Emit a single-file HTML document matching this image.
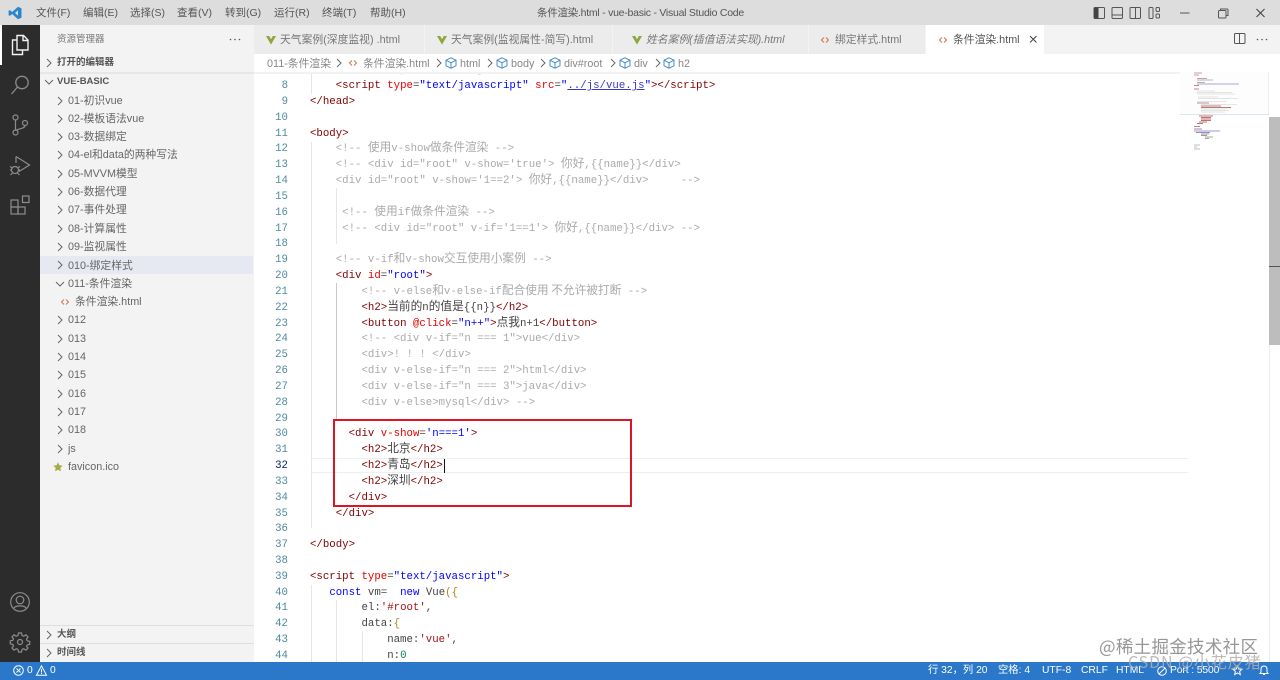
<!DOCTYPE html>
<html lang="zh"><head><meta charset="utf-8"><title>条件渲染.html - vue-basic - Visual Studio Code</title>
<style>
html,body{margin:0;padding:0;width:1280px;height:680px;overflow:hidden;background:#fff}
body{position:relative;font-family:"Liberation Sans","Noto Sans CJK SC",sans-serif;font-size:11px;color:#616161;filter:blur(.3px)}
.a{position:absolute;white-space:nowrap}
svg{position:absolute;overflow:visible}
#title{left:0;top:0;width:1280px;height:25px;background:#dddddd}
.mn{top:5px;line-height:16px;color:#555;font-size:10.5px}
#act{left:0;top:25px;width:40px;height:637px;background:#2c2c2c}
#side{left:40px;top:25px;width:214px;height:637px;background:#f3f3f3}
.r{left:68px;height:18px;line-height:18px;color:#666;font-size:10.8px}
.h{left:57px;font-weight:bold;font-size:9.5px;color:#555;line-height:14px}
#tabs{left:254px;top:25px;width:1026px;height:29px;background:#f3f3f3}
.tab{top:25px;height:29px;background:#ececec;border-right:1px solid #f3f3f3}
.tt{top:32px;line-height:16px;color:#777;font-size:10.8px}
.b{top:56px;line-height:16px;color:#888;font-size:10.8px}
#code{left:254px;top:72px;width:1015px;height:590px;overflow:hidden;background:#fff}
#nums{position:absolute;left:0;top:-8.7px;width:34px;text-align:right;font:10.72px/15.83px "Liberation Mono",monospace;color:#4f8ba0}
#nums div{height:15.83px}
#src{position:absolute;left:56px;top:-8.7px;font:10.72px/15.83px "Liberation Mono","Noto Sans CJK SC",monospace;color:#444}
#src div{height:15.83px;white-space:pre}
i{font-style:normal;font-size:11.7px;font-family:"Noto Sans CJK SC",sans-serif;line-height:10px}
.t{color:#800000}.n{color:#e50000}.s{color:#0000ff}.c{color:#aaa}.k{color:#0000ff}.q{color:#a31515}.g{color:#098658}.y{color:#b5851a}
.gd{position:absolute;width:1px;background:#e6e6e6}
#st{left:0;top:662px;width:1280px;height:18px;background:#2b78cb}
.w{top:663px;line-height:16px;color:#fff;font-size:10.3px}
.wm{color:rgba(110,110,110,.72);font-family:"Noto Sans CJK SC","Liberation Sans",sans-serif}
</style></head><body>

<svg width="0" height="0" style="position:absolute">
<defs>
<symbol id="cr" viewBox="0 0 8 10"><path d="M2 1l4 4-4 4" fill="none" stroke="#666" stroke-width="1"/></symbol>
<symbol id="cd" viewBox="0 0 10 8"><path d="M1 2l4 4 4-4" fill="none" stroke="#666" stroke-width="1"/></symbol>
<symbol id="vue" viewBox="0 0 10 10"><path d="M0 1h3.2L5 4.2 6.8 1H10L5 9.6z" fill="#8ea63c"/></symbol>
<symbol id="ht" viewBox="0 0 10 8"><path d="M4 1.500L1.500 4 4 6.500M6 1.500L8.500 4 6 6.500" fill="none" stroke="#d0744f" stroke-width="1"/></symbol>
<symbol id="cube" viewBox="0 0 12 12"><path d="M6 .8l5 2.400v5.600l-5 2.400-5-2.400V3.200zM1 3.200l5 2.600 5-2.600M6 5.800v5.400" fill="none" stroke="#4a8cc4" stroke-width="1"/></symbol>
</defs>
</svg>

<!-- Title bar -->
<div class="a" id="title"></div>
<svg style="left:8px;top:6px" width="14" height="14" viewBox="0 0 14 14"><path d="M10 .8L13.500 2.400v9.200L10 13.200 4.200 8 1.800 9.900.6 9.200V4.800l1.200-.7L4.200 6zM10 4.200L7 7l3 2.800z" fill="#2a85cf"/></svg>
<div class="a mn" style="left:36px">文件(F)</div>
<div class="a mn" style="left:83px">编辑(E)</div>
<div class="a mn" style="left:130px">选择(S)</div>
<div class="a mn" style="left:177px">查看(V)</div>
<div class="a mn" style="left:225px">转到(G)</div>
<div class="a mn" style="left:274px">运行(R)</div>
<div class="a mn" style="left:322px">终端(T)</div>
<div class="a mn" style="left:370px">帮助(H)</div>
<div class="a mn" style="left:537px;letter-spacing:-.25px">条件渲染.html - vue-basic - Visual Studio Code</div>
<svg style="left:1093px;top:7px" width="70" height="12" viewBox="0 0 70 12">
<rect x="1" y=".5" width="10.500" height="11" rx="1" fill="none" stroke="#555"/><rect x="1" y=".5" width="4.500" height="11" fill="#444"/>
<rect x="19" y=".5" width="10.500" height="11" rx="1" fill="none" stroke="#555"/><path d="M19 8h10.500" stroke="#555"/>
<rect x="37" y=".5" width="10.500" height="11" rx="1" fill="none" stroke="#555"/><path d="M42.500 .5v11" stroke="#555"/>
<rect x="56" y=".5" width="4" height="11" rx="1" fill="none" stroke="#555"/><rect x="63" y=".5" width="3.500" height="4" rx="1" fill="none" stroke="#555"/><rect x="63" y="7" width="3.500" height="4" rx="1" fill="none" stroke="#555"/>
</svg>
<svg style="left:1180px;top:8px" width="90" height="12" viewBox="0 0 90 12">
<path d="M0 5h9.500" stroke="#555"/>
<rect x="38.500" y="2.500" width="7.500" height="7.500" rx="1" fill="none" stroke="#555"/><path d="M40.500 2.500V1h6.500q1 0 1 1v5.500h-2" fill="none" stroke="#555"/>
<path d="M76.500 1l8 8M84.500 1l-8 8" stroke="#444" stroke-width="1.100"/>
</svg>

<!-- Activity bar -->
<div class="a" id="act"></div>
<div class="a" style="left:0;top:25px;width:1.500px;height:40px;background:#fff"></div>
<svg style="left:10px;top:34px" width="20" height="22" viewBox="0 0 20 22"><path d="M7 1.500h6.500l4.500 4.500v10H7zM13 1.500V6.500h5M7 6H2.500V20.500H12.500V16" fill="none" stroke="#f2f2f2" stroke-width="1.400"/></svg>
<svg style="left:10px;top:75px" width="20" height="20" viewBox="0 0 20 20"><circle cx="12" cy="7.500" r="6.200" fill="none" stroke="#8c8c8c" stroke-width="1.300"/><path d="M7.500 12L1.500 19" stroke="#8c8c8c" stroke-width="1.300"/></svg>
<svg style="left:11px;top:114px" width="18" height="22" viewBox="0 0 18 22"><g fill="none" stroke="#8c8c8c" stroke-width="1.200"><circle cx="4.500" cy="3.500" r="2.500"/><circle cx="4.500" cy="18.500" r="2.500"/><circle cx="14" cy="9" r="2.500"/><path d="M4.500 6v10M14 11.500c0 3.500-7 3-9.500 5"/></g></svg>
<svg style="left:9px;top:155px" width="22" height="22" viewBox="0 0 22 22"><g fill="none" stroke="#8c8c8c" stroke-width="1.200"><path d="M7 1.500L20.500 10 10 16.500M7 1.500V8"/><circle cx="6" cy="15" r="3.500"/><path d="M1 11.500l2.500 1.500M11 11.500L8.500 13M1 15h1.500M9.500 15H11M1.500 20l2-2M10.500 20l-2-2"/></g></svg>
<svg style="left:10px;top:195px" width="20" height="20" viewBox="0 0 20 20"><g fill="none" stroke="#8c8c8c" stroke-width="1.200"><rect x="1" y="5" width="7" height="7"/><rect x="1" y="12" width="7" height="7"/><rect x="8" y="12" width="7" height="7"/><rect x="12.500" y="1" width="6.500" height="6.500"/></g></svg>
<svg style="left:10px;top:592px" width="20" height="20" viewBox="0 0 20 20"><g fill="none" stroke="#8c8c8c" stroke-width="1.200"><circle cx="10" cy="10" r="9.300"/><circle cx="10" cy="8" r="3.800"/><path d="M3.500 16.500c2-3.500 11-3.500 13 0"/></g></svg>
<svg style="left:10px;top:632px" width="20" height="20" viewBox="0 0 20 20"><g fill="none" stroke="#8c8c8c" stroke-width="1.200"><circle cx="10" cy="10" r="2.500"/><path d="M8.500 1h3l.5 2.500 1.700.7L16 2.800 18 5l-1.500 2.200.7 1.700 2.500.5v3l-2.500.5-.7 1.500L18 16l-2 2.200-2.300-1.500-1.700.8-.5 2.500h-3l-.5-2.500-1.700-.8L4 18.200 2 16l1.500-2.100-.7-1.500-2.500-.5v-3l2.500-.5.700-1.700L2 5l2-2.200 2.300 1.400 1.700-.7z"/></g></svg>

<!-- Sidebar -->
<div class="a" id="side"></div>
<div class="a" style="left:57px;top:33px;font-size:9.500px;line-height:14px;color:#777">资源管理器</div>
<svg style="left:229px;top:38px" width="12" height="3"><circle cx="1.500" cy="1.500" r=".8" fill="#555"/><circle cx="6" cy="1.500" r=".8" fill="#555"/><circle cx="10.500" cy="1.500" r=".8" fill="#555"/></svg>
<svg style="left:45px;top:58px" width="8" height="10"><use href="#cr"/></svg>
<div class="a h" style="top:56px">打开的编辑器</div>
<div class="a" style="left:40px;top:72px;width:214px;height:2px;background:#e7e7e7"></div>
<svg style="left:44px;top:78px" width="10" height="8"><use href="#cd"/></svg>
<div class="a h" style="top:75px">VUE-BASIC</div>

<div class="a" style="left:40px;top:256px;width:213px;height:18px;background:#e6e8f2"></div>

<div class="a r" style="top:91.500px">01-初识vue</div>
<div class="a r" style="top:109.500px">02-模板语法vue</div>
<div class="a r" style="top:128px">03-数据绑定</div>
<div class="a r" style="top:146px">04-el和data的两种写法</div>
<div class="a r" style="top:164.500px">05-MVVM模型</div>
<div class="a r" style="top:183px">06-数据代理</div>
<div class="a r" style="top:201px">07-事件处理</div>
<div class="a r" style="top:219.500px">08-计算属性</div>
<div class="a r" style="top:238px">09-监视属性</div>
<div class="a r" style="top:256.500px">010-绑定样式</div>
<div class="a r" style="top:274.500px">011-条件渲染</div>
<div class="a r" style="top:293px;left:75px">条件渲染.html</div>
<div class="a r" style="top:311px">012</div>
<div class="a r" style="top:329.500px">013</div>
<div class="a r" style="top:348px">014</div>
<div class="a r" style="top:366px">015</div>
<div class="a r" style="top:384.500px">016</div>
<div class="a r" style="top:403px">017</div>
<div class="a r" style="top:421px">018</div>
<div class="a r" style="top:440px">js</div>
<div class="a r" style="top:458px">favicon.ico</div>

<svg style="left:56px;top:96px" width="8" height="10"><use href="#cr"/></svg>
<svg style="left:56px;top:114px" width="8" height="10"><use href="#cr"/></svg>
<svg style="left:56px;top:132px" width="8" height="10"><use href="#cr"/></svg>
<svg style="left:56px;top:150px" width="8" height="10"><use href="#cr"/></svg>
<svg style="left:56px;top:169px" width="8" height="10"><use href="#cr"/></svg>
<svg style="left:56px;top:187px" width="8" height="10"><use href="#cr"/></svg>
<svg style="left:56px;top:205px" width="8" height="10"><use href="#cr"/></svg>
<svg style="left:56px;top:224px" width="8" height="10"><use href="#cr"/></svg>
<svg style="left:56px;top:242px" width="8" height="10"><use href="#cr"/></svg>
<svg style="left:56px;top:260px" width="8" height="10"><use href="#cr"/></svg>
<svg style="left:55px;top:280px" width="10" height="8"><use href="#cd"/></svg>
<svg style="left:60px;top:298px" width="10" height="8"><use href="#ht"/></svg>
<svg style="left:56px;top:315px" width="8" height="10"><use href="#cr"/></svg>
<svg style="left:56px;top:334px" width="8" height="10"><use href="#cr"/></svg>
<svg style="left:56px;top:352px" width="8" height="10"><use href="#cr"/></svg>
<svg style="left:56px;top:370px" width="8" height="10"><use href="#cr"/></svg>
<svg style="left:56px;top:389px" width="8" height="10"><use href="#cr"/></svg>
<svg style="left:56px;top:407px" width="8" height="10"><use href="#cr"/></svg>
<svg style="left:56px;top:425px" width="8" height="10"><use href="#cr"/></svg>
<svg style="left:56px;top:444px" width="8" height="10"><use href="#cr"/></svg>
<svg style="left:53px;top:462px" width="10" height="10" viewBox="0 0 10 10"><path d="M5 .3l1.400 3 3.300.4-2.400 2.300.6 3.300L5 7.700 2.100 9.300l.6-3.300L.3 3.700l3.300-.4z" fill="#a3ad3f"/></svg>

<div class="a" style="left:40px;top:625px;width:214px;height:1px;background:#dedede"></div>
<svg style="left:45px;top:630px" width="8" height="10"><use href="#cr"/></svg>
<div class="a h" style="top:628px">大纲</div>
<div class="a" style="left:40px;top:643px;width:214px;height:1px;background:#dedede"></div>
<svg style="left:45px;top:648px" width="8" height="10"><use href="#cr"/></svg>
<div class="a h" style="top:646px">时间线</div>

<!-- Tabs -->
<div class="a" id="tabs"></div>
<div class="a tab" style="left:254px;width:170px"></div>
<div class="a tab" style="left:425px;width:187px"></div>
<div class="a tab" style="left:613px;width:195px"></div>
<div class="a tab" style="left:809px;width:116px"></div>
<div class="a" style="left:926px;top:25px;width:118px;height:29px;background:#fff"></div>
<svg style="left:266px;top:35px" width="10" height="10"><use href="#vue"/></svg>
<div class="a tt" style="left:280px">天气案例(深度监视) .html</div>
<svg style="left:437px;top:35px" width="10" height="10"><use href="#vue"/></svg>
<div class="a tt" style="left:451px">天气案例(监视属性-简写).html</div>
<svg style="left:632px;top:35px" width="10" height="10"><use href="#vue"/></svg>
<div class="a tt" style="left:646px;font-style:italic">姓名案例(插值语法实现).html</div>
<svg style="left:820px;top:36px" width="10" height="8"><use href="#ht"/></svg>
<div class="a tt" style="left:835px">绑定样式.html</div>
<svg style="left:938px;top:36px" width="10" height="8"><use href="#ht"/></svg>
<div class="a tt" style="left:953px;color:#555">条件渲染.html</div>
<svg style="left:1029px;top:35px" width="9" height="9"><path d="M1 1l6.500 6.500M7.500 1L1 7.500" stroke="#444" stroke-width="1"/></svg>
<svg style="left:1234px;top:33px" width="12" height="12"><rect x=".5" y=".5" width="10.500" height="10" rx="1" fill="none" stroke="#555"/><path d="M5.500 .5v10" stroke="#555"/></svg>
<svg style="left:1256px;top:38px" width="12" height="3"><circle cx="1.500" cy="1.500" r=".8" fill="#555"/><circle cx="6" cy="1.500" r=".8" fill="#555"/><circle cx="10.500" cy="1.500" r=".8" fill="#555"/></svg>

<!-- Breadcrumbs -->
<div class="a" style="left:254px;top:54px;width:1026px;height:18px;background:#fff"></div>
<div class="a b" style="left:267px">011-条件渲染</div>
<svg style="left:335px;top:58px" width="8" height="10"><use href="#cr"/></svg>
<svg style="left:348px;top:59px" width="10" height="8"><use href="#ht"/></svg>
<div class="a b" style="left:363px">条件渲染.html</div>
<svg style="left:435px;top:58px" width="8" height="10"><use href="#cr"/></svg>
<svg style="left:445px;top:57px" width="12" height="12"><use href="#cube"/></svg>
<div class="a b" style="left:460px">html</div>
<svg style="left:486px;top:58px" width="8" height="10"><use href="#cr"/></svg>
<svg style="left:496px;top:57px" width="12" height="12"><use href="#cube"/></svg>
<div class="a b" style="left:511px">body</div>
<svg style="left:539px;top:58px" width="8" height="10"><use href="#cr"/></svg>
<svg style="left:549px;top:57px" width="12" height="12"><use href="#cube"/></svg>
<div class="a b" style="left:564px">div#root</div>
<svg style="left:609px;top:58px" width="8" height="10"><use href="#cr"/></svg>
<svg style="left:619px;top:57px" width="12" height="12"><use href="#cube"/></svg>
<div class="a b" style="left:634px">div</div>
<svg style="left:654px;top:58px" width="8" height="10"><use href="#cr"/></svg>
<svg style="left:663px;top:57px" width="12" height="12"><use href="#cube"/></svg>
<div class="a b" style="left:678px">h2</div>

<!-- Editor -->
<div class="a" id="code">
<div class="gd" style="left:56.500px;top:0;height:22px"></div>
<div class="gd" style="left:56.500px;top:70px;height:386px"></div>
<div class="gd" style="left:81.500px;top:116px;height:56px"></div>
<div class="gd" style="left:81.500px;top:211px;height:136px;background:#c9c9c9"></div>
<div class="gd" style="left:56.500px;top:513px;height:80px"></div>
<div class="gd" style="left:81.500px;top:528px;height:70px"></div>
<div class="gd" style="left:107.500px;top:559px;height:40px"></div>
<div class="a" style="left:57px;top:386px;width:877px;height:15px;border-top:1px solid #eee;border-bottom:1px solid #eee;box-sizing:border-box"></div>
<div id="nums"><div>7</div><div>8</div><div>9</div><div>10</div><div>11</div><div>12</div><div>13</div><div>14</div><div>15</div><div>16</div><div>17</div><div>18</div><div>19</div><div>20</div><div>21</div><div>22</div><div>23</div><div>24</div><div>25</div><div>26</div><div>27</div><div>28</div><div>29</div><div>30</div><div>31</div><div style="color:#0b216f">32</div><div>33</div><div>34</div><div>35</div><div>36</div><div>37</div><div>38</div><div>39</div><div>40</div><div>41</div><div>42</div><div>43</div><div>44</div><div>45</div></div>
<div id="src"><div class="c">    &lt;!-- &lt;script src="vue.js"&gt; --&gt;</div>
<div>    <span class="t">&lt;script</span> <span class="n">type</span>=<span class="s">"text/javascript"</span> <span class="n">src</span>=<span class="s">"<span style="text-decoration:underline;color:#3a3ac8">../js/vue.js</span>"</span><span class="t">&gt;&lt;/script&gt;</span></div>
<div class="t">&lt;/head&gt;</div>
<div> </div>
<div class="t">&lt;body&gt;</div>
<div class="c">    &lt;!-- <i>使用</i>v-show<i>做条件渲染</i> --&gt;</div>
<div class="c">    &lt;!-- &lt;div id="root" v-show='true'&gt; <i>你好</i>,{{name}}&lt;/div&gt;</div>
<div class="c">    &lt;div id="root" v-show='1==2'&gt; <i>你好</i>,{{name}}&lt;/div&gt;     --&gt;</div>
<div> </div>
<div class="c">     &lt;!-- <i>使用</i>if<i>做条件渲染</i> --&gt;</div>
<div class="c">     &lt;!-- &lt;div id="root" v-if='1==1'&gt; <i>你好</i>,{{name}}&lt;/div&gt; --&gt;</div>
<div> </div>
<div class="c">    &lt;!-- v-if<i>和</i>v-show<i>交互使用小案例</i> --&gt;</div>
<div>    <span class="t">&lt;div</span> <span class="n">id</span>=<span class="s">"root"</span><span class="t">&gt;</span></div>
<div class="c">        &lt;!-- v-else<i>和</i>v-else-if<i>配合使用 不允许被打断</i> --&gt;</div>
<div>        <span class="t">&lt;h2&gt;</span><i>当前的</i>n<i>的值是</i>{{n}}<span class="t">&lt;/h2&gt;</span></div>
<div>        <span class="t">&lt;button</span> <span class="n">@click</span>=<span class="s">"n++"</span><span class="t">&gt;</span><i>点我</i>n+1<span class="t">&lt;/button&gt;</span></div>
<div class="c">        &lt;!-- &lt;div v-if="n === 1"&gt;vue&lt;/div&gt;</div>
<div class="c">        &lt;div&gt;! ! ! &lt;/div&gt;</div>
<div class="c">        &lt;div v-else-if="n === 2"&gt;html&lt;/div&gt;</div>
<div class="c">        &lt;div v-else-if="n === 3"&gt;java&lt;/div&gt;</div>
<div class="c">        &lt;div v-else&gt;mysql&lt;/div&gt; --&gt;</div>
<div> </div>
<div>      <span class="t">&lt;div</span> <span class="n">v-show</span>=<span class="s">'n===1'</span><span class="t">&gt;</span></div>
<div>        <span class="t">&lt;h2&gt;</span><i>北京</i><span class="t">&lt;/h2&gt;</span></div>
<div>        <span class="t">&lt;h2&gt;</span><i>青岛</i><span class="t">&lt;/h2&gt;</span></div>
<div>        <span class="t">&lt;h2&gt;</span><i>深圳</i><span class="t">&lt;/h2&gt;</span></div>
<div>      <span class="t">&lt;/div&gt;</span></div>
<div>    <span class="t">&lt;/div&gt;</span></div>
<div> </div>
<div class="t">&lt;/body&gt;</div>
<div> </div>
<div><span class="t">&lt;script</span> <span class="n">type</span>=<span class="s">"text/javascript"</span><span class="t">&gt;</span></div>
<div>   <span class="k">const</span> vm=  <span class="k">new</span> Vue<span class="y">({</span></div>
<div>        el:<span class="q">'#root'</span>,</div>
<div>        data:<span class="y">{</span></div>
<div>            name:<span class="q">'vue'</span>,</div>
<div>            n:<span class="g">0</span></div>
</div>
<div class="a" style="left:189.500px;top:387px;width:1.500px;height:14px;background:#111"></div>
</div>
<div class="a" style="left:254px;top:72px;width:935px;height:2px;background:#f2f2f2"></div>
<div class="a" style="left:333px;top:419px;width:294.500px;height:83.500px;border:2px solid #dc1524"></div>

<!-- Minimap -->
<svg style="left:1180px;top:72px" width="100" height="80" viewBox="0 0 100 80">
<rect x="0" y="0" width="89" height="42" fill="#fdfdfd"/><path d="M0 42.500h89" stroke="#dbe4f4"/><path d="M88.500 0v42" stroke="#eee"/>
<g stroke-width="1" fill="none" opacity=".75">
<path d="M14 1h8M14 3h5" stroke="#b98080"/><path d="M17 6.500h10" stroke="#b98080"/><path d="M17 8h16" stroke="#9a9ac8"/><path d="M17 10.500h8" stroke="#c09090"/><path d="M17 12h42" stroke="#8a8ad8"/>
<path d="M14 13.500h5M14 17h5" stroke="#b06060"/>
<path d="M17 19h18M17 20.500h35M17 22h38M18 25h20M18 26.500h40M17 29.500h30" stroke="#dcdcdc"/>
<path d="M17 31h12" stroke="#a07070"/>
<path d="M21 32.500h36M21 37h26M21 38.500h28M21 40h24" stroke="#dcdcdc"/>
<path d="M21 34h20M21 35.500h30" stroke="#a05050"/>
<path d="M19 44h14M21 45.500h10M21 47h10M21 48.500h10M19 50h8M17 51.500h6" stroke="#b04040"/>
<path d="M14 54.500h6M14 57h8" stroke="#a06060"/>
<path d="M14 59h26" stroke="#7878d0"/><path d="M16 60.500h14" stroke="#6a6ab0"/><path d="M21 62h8M21 63.500h6" stroke="#8a7070"/><path d="M25 65h8M25 66.500h4" stroke="#8a8a70"/>
<path d="M14 73h6M14 75h3M14 77h6" stroke="#aaa"/>
</g>
</svg>
<div class="a" style="left:1269px;top:117px;width:11px;height:228px;background:#bdbdbd"></div>
<div class="a" style="left:1269px;top:265.500px;width:11px;height:1.500px;background:#555"></div>
<div class="a" style="left:1269px;top:345px;width:1px;height:317px;background:#eee"></div>

<!-- Status bar -->
<div class="a" id="st"></div>
<svg style="left:13px;top:665px" width="11" height="11" viewBox="0 0 11 11"><circle cx="5.500" cy="5.500" r="4.800" fill="none" stroke="#fff"/><path d="M3.500 3.500l4 4M7.500 3.500l-4 4" stroke="#fff"/></svg>
<div class="a w" style="left:27px">0</div>
<svg style="left:36px;top:665px" width="11" height="11" viewBox="0 0 11 11"><path d="M5.500 .8l5 9.400H.5zM5.500 4v3.500M5.500 8v1" fill="none" stroke="#fff"/></svg>
<div class="a w" style="left:50px">0</div>
<div class="a w" style="left:928px">行 32，列 20</div>
<div class="a w" style="left:998px">空格: 4</div>
<div class="a w" style="left:1042px">UTF-8</div>
<div class="a w" style="left:1081px">CRLF</div>
<div class="a w" style="left:1116px">HTML</div>
<svg style="left:1157px;top:666px" width="10" height="10" viewBox="0 0 10 10"><circle cx="5" cy="5" r="4.300" fill="none" stroke="#fff"/><path d="M2 8l6-6" stroke="#fff"/></svg>
<div class="a w" style="left:1170px;letter-spacing:-.1px">Port : 5500</div>
<svg style="left:1232px;top:665px" width="11" height="11" viewBox="0 0 11 11"><path d="M5.500 1l1.300 3 3.200.3-2.400 2.100.7 3.100-2.800-1.600-2.800 1.600.7-3.100L1 4.300l3.200-.3z" fill="none" stroke="#fff"/></svg>
<svg style="left:1259px;top:665px" width="10" height="11" viewBox="0 0 10 11"><path d="M5 1c-2 0-3 1.500-3 3.500V7L1 8.500h8L8 7V4.500C8 2.500 7 1 5 1zM4 9.500h2" fill="none" stroke="#fff"/></svg>

<!-- Watermarks -->
<div class="a wm" style="left:1099px;top:635px;font-size:17.500px;line-height:24px;letter-spacing:.3px">@稀土掘金技术社区</div>
<div class="a wm" style="left:1128px;top:651px;font-size:16px;line-height:20px;letter-spacing:.9px;color:rgba(175,175,175,.85)">CSDN @小花皮猪</div>
</body></html>
